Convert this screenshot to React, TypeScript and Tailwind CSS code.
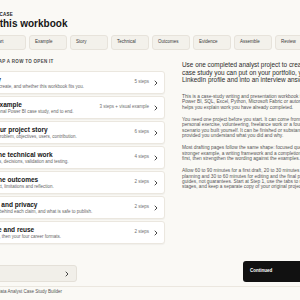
const tabs = ["Start", "Example", "Story", "Technical", "Outcomes", "Evidence", "Assemble", "Review"];

const rows = [
  { title: "Get ready", sub: "What you will create, and whether this workbook fits you.", steps: "5 steps" },
  { title: "See the example", sub: "Explore a fictional Power BI case study, end to end.", steps: "3 steps + visual example" },
  { title: "Shape your project story", sub: "Background, problem, objectives, users, contribution.", steps: "6 steps" },
  { title: "Explain the technical work", sub: "Tools, methods, decisions, validation and testing.", steps: "4 steps" },
  { title: "Explain the outcomes", sub: "Results, impact, limitations and reflection.", steps: "2 steps" },
  { title: "Evidence and privacy", sub: "The evidence behind each claim, and what is safe to publish.", steps: "2 steps" },
  { title: "Assemble and reuse", sub: "One final draft, then your four career formats.", steps: "2 steps" },
];

const intro = [
  [
    "This is a case-study writing and presentation workbook for",
    "Power BI, SQL, Excel, Python, Microsoft Fabric or automation work. It",
    "helps you explain work you have already completed.",
  ],
  [
    "You need one project before you start. It can come from a job, a",
    "personal exercise, volunteering, freelance work or a found dataset",
    "scenario you built yourself. It can be finished or substantially done,",
    "provided you understand what you did and why.",
  ],
  [
    "Most drafting pages follow the same shape: focused questions, a",
    "stronger example, a writing framework and a completion check. Draft",
    "first, then strengthen the wording against the examples.",
  ],
  [
    "Allow 60 to 90 minutes for a first draft, 20 to 30 minutes for",
    "planning and 30 to 60 minutes for editing and the final pass. These are",
    "guides, not guarantees. Start at Step 1, use the tabs to move between",
    "stages, and keep a separate copy of your original project notes.",
  ],
];

const Chevron = ({ className = "" }: { className?: string }) => (
  <svg viewBox="0 0 6 8" className={className} fill="none">
    <path d="M1.5 1 L4.5 4 L1.5 7" stroke="currentColor" strokeWidth="1.3" strokeLinecap="round" strokeLinejoin="round" />
  </svg>
);

export default function App() {
  return (
    <div className="w-[300px] h-[300px] overflow-hidden bg-[#faf9f5] text-[#151515] font-['Liberation_Sans',Arial,sans-serif]">
      <div className="-ml-[38px] w-[400px] pt-[12px]">
        <div className="pl-[26px]">
          <p className="text-[4.5px] leading-[6px] font-bold tracking-[0.3px] uppercase">The case</p>
          <h1 className="text-[10px] leading-[12px] font-bold">In this workbook</h1>
        </div>

        <div className="pl-[26px] mt-[5px] flex gap-[3px]">
          {tabs.map((t) => (
            <div
              key={t}
              className="w-[38px] h-[15px] shrink-0 flex items-center px-[5px] rounded-[3px] border border-[#e7e3db] bg-[#f3f1eb] text-[4.5px] text-[#3a3a3a]"
            >
              {t}
            </div>
          ))}
        </div>

        <div className="mt-[9px] flex gap-[17px]">
          <div className="w-[203px] shrink-0">
            <p className="pl-[34px] text-[4.5px] leading-[6px] font-bold tracking-[0.3px] uppercase text-[#4a4a4a]">
              Tap a row to open it
            </p>
            <div className="mt-[6px] flex flex-col gap-[2px]">
              {rows.map((r) => (
                <div
                  key={r.title}
                  className="h-[23px] flex items-center justify-between pl-[8px] pr-[6px] rounded-[3px] border border-[#ebe7df] bg-white shadow-[0_1px_1px_rgba(0,0,0,0.04)]"
                >
                  <div>
                    <p className="text-[6.5px] leading-[8px] font-bold whitespace-nowrap">{r.title}</p>
                    <p className="text-[4.5px] leading-[6px] text-[#666] whitespace-nowrap">{r.sub}</p>
                  </div>
                  <div className="flex items-center gap-[5px]">
                    <span className="text-[4.5px] text-[#6f6f6f] whitespace-nowrap">{r.steps}</span>
                    <Chevron className="w-[4px] h-[6px] text-[#2a2a2a]" />
                  </div>
                </div>
              ))}
            </div>
          </div>

          <div className="w-[170px] shrink-0 pt-[2px]">
            <p className="text-[6.4px] leading-[7.5px] text-[#2b2b2b] whitespace-nowrap mb-[10.5px]">
              Use one completed analyst project to create a
              <br />
              case study you can put on your portfolio, your
              <br />
              LinkedIn profile and into an interview answer.
            </p>
            {intro.map((p, i) => (
              <p key={i} className="text-[4.8px] leading-[5.33px] text-[#555] whitespace-nowrap mb-[7px]">
                {p.map((line, j) => (
                  <span key={j} className="block">
                    {line}
                  </span>
                ))}
              </p>
            ))}
          </div>
        </div>

        <div className="mt-[17px] flex items-end gap-[166px]">
          <div className="w-[115px] h-[17px] flex items-center justify-end pr-[7px] rounded-[3px] border border-[#e4e0d8] bg-[#f1efe9] text-[#2a2a2a]">
            <Chevron className="w-[4px] h-[6px]" />
          </div>
          <div className="w-[70px] h-[21px] flex items-center pl-[7px] rounded-[3px] bg-[#111] text-white text-[4.5px] font-bold">
            Continued
          </div>
        </div>

        <div className="mt-[4px] border-t border-[#ebe7df]">
          <p className="pl-[35px] mt-[2px] text-[4.5px] leading-[6px] text-[#555]">Data Analyst Case Study Builder</p>
        </div>
      </div>
    </div>
  );
}
